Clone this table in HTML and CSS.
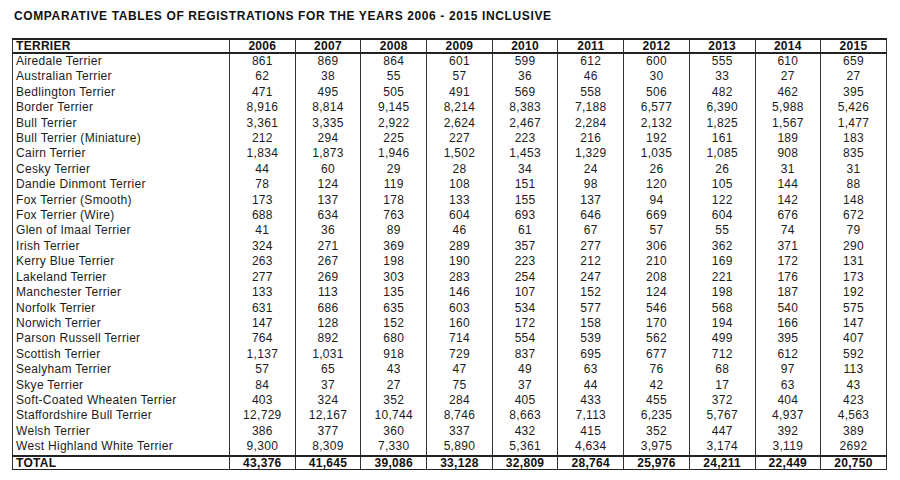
FILE: index.html
```html
<!DOCTYPE html>
<html>
<head>
<meta charset="utf-8">
<link rel="stylesheet" href="styles.css">
</head>
<body>
<div class="page">
<h1 class="title">COMPARATIVE TABLES OF REGISTRATIONS FOR THE YEARS 2006 - 2015 INCLUSIVE</h1>
<table class="reg">
<colgroup><col class="c-name"><col class="c-yr"><col class="c-yr"><col class="c-yr"><col class="c-yr"><col class="c-yr"><col class="c-yr"><col class="c-yr"><col class="c-yr"><col class="c-yr"><col class="c-yr"></colgroup>
<thead>
<tr><th class="name">TERRIER</th><th>2006</th><th>2007</th><th>2008</th><th>2009</th><th>2010</th><th>2011</th><th>2012</th><th>2013</th><th>2014</th><th>2015</th></tr>
</thead>
<tbody>
<tr><td class="name">Airedale Terrier</td><td>861</td><td>869</td><td>864</td><td>601</td><td>599</td><td>612</td><td>600</td><td>555</td><td>610</td><td>659</td></tr>
<tr><td class="name">Australian Terrier</td><td>62</td><td>38</td><td>55</td><td>57</td><td>36</td><td>46</td><td>30</td><td>33</td><td>27</td><td>27</td></tr>
<tr><td class="name">Bedlington Terrier</td><td>471</td><td>495</td><td>505</td><td>491</td><td>569</td><td>558</td><td>506</td><td>482</td><td>462</td><td>395</td></tr>
<tr><td class="name">Border Terrier</td><td>8,916</td><td>8,814</td><td>9,145</td><td>8,214</td><td>8,383</td><td>7,188</td><td>6,577</td><td>6,390</td><td>5,988</td><td>5,426</td></tr>
<tr><td class="name">Bull Terrier</td><td>3,361</td><td>3,335</td><td>2,922</td><td>2,624</td><td>2,467</td><td>2,284</td><td>2,132</td><td>1,825</td><td>1,567</td><td>1,477</td></tr>
<tr><td class="name">Bull Terrier (Miniature)</td><td>212</td><td>294</td><td>225</td><td>227</td><td>223</td><td>216</td><td>192</td><td>161</td><td>189</td><td>183</td></tr>
<tr><td class="name">Cairn Terrier</td><td>1,834</td><td>1,873</td><td>1,946</td><td>1,502</td><td>1,453</td><td>1,329</td><td>1,035</td><td>1,085</td><td>908</td><td>835</td></tr>
<tr><td class="name">Cesky Terrier</td><td>44</td><td>60</td><td>29</td><td>28</td><td>34</td><td>24</td><td>26</td><td>26</td><td>31</td><td>31</td></tr>
<tr><td class="name">Dandie Dinmont Terrier</td><td>78</td><td>124</td><td>119</td><td>108</td><td>151</td><td>98</td><td>120</td><td>105</td><td>144</td><td>88</td></tr>
<tr><td class="name">Fox Terrier (Smooth)</td><td>173</td><td>137</td><td>178</td><td>133</td><td>155</td><td>137</td><td>94</td><td>122</td><td>142</td><td>148</td></tr>
<tr><td class="name">Fox Terrier (Wire)</td><td>688</td><td>634</td><td>763</td><td>604</td><td>693</td><td>646</td><td>669</td><td>604</td><td>676</td><td>672</td></tr>
<tr><td class="name">Glen of Imaal Terrier</td><td>41</td><td>36</td><td>89</td><td>46</td><td>61</td><td>67</td><td>57</td><td>55</td><td>74</td><td>79</td></tr>
<tr><td class="name">Irish Terrier</td><td>324</td><td>271</td><td>369</td><td>289</td><td>357</td><td>277</td><td>306</td><td>362</td><td>371</td><td>290</td></tr>
<tr><td class="name">Kerry Blue Terrier</td><td>263</td><td>267</td><td>198</td><td>190</td><td>223</td><td>212</td><td>210</td><td>169</td><td>172</td><td>131</td></tr>
<tr><td class="name">Lakeland Terrier</td><td>277</td><td>269</td><td>303</td><td>283</td><td>254</td><td>247</td><td>208</td><td>221</td><td>176</td><td>173</td></tr>
<tr><td class="name">Manchester Terrier</td><td>133</td><td>113</td><td>135</td><td>146</td><td>107</td><td>152</td><td>124</td><td>198</td><td>187</td><td>192</td></tr>
<tr><td class="name">Norfolk Terrier</td><td>631</td><td>686</td><td>635</td><td>603</td><td>534</td><td>577</td><td>546</td><td>568</td><td>540</td><td>575</td></tr>
<tr><td class="name">Norwich Terrier</td><td>147</td><td>128</td><td>152</td><td>160</td><td>172</td><td>158</td><td>170</td><td>194</td><td>166</td><td>147</td></tr>
<tr><td class="name">Parson Russell Terrier</td><td>764</td><td>892</td><td>680</td><td>714</td><td>554</td><td>539</td><td>562</td><td>499</td><td>395</td><td>407</td></tr>
<tr><td class="name">Scottish Terrier</td><td>1,137</td><td>1,031</td><td>918</td><td>729</td><td>837</td><td>695</td><td>677</td><td>712</td><td>612</td><td>592</td></tr>
<tr><td class="name">Sealyham Terrier</td><td>57</td><td>65</td><td>43</td><td>47</td><td>49</td><td>63</td><td>76</td><td>68</td><td>97</td><td>113</td></tr>
<tr><td class="name">Skye Terrier</td><td>84</td><td>37</td><td>27</td><td>75</td><td>37</td><td>44</td><td>42</td><td>17</td><td>63</td><td>43</td></tr>
<tr><td class="name">Soft-Coated Wheaten Terrier</td><td>403</td><td>324</td><td>352</td><td>284</td><td>405</td><td>433</td><td>455</td><td>372</td><td>404</td><td>423</td></tr>
<tr><td class="name">Staffordshire Bull Terrier</td><td>12,729</td><td>12,167</td><td>10,744</td><td>8,746</td><td>8,663</td><td>7,113</td><td>6,235</td><td>5,767</td><td>4,937</td><td>4,563</td></tr>
<tr><td class="name">Welsh Terrier</td><td>386</td><td>377</td><td>360</td><td>337</td><td>432</td><td>415</td><td>352</td><td>447</td><td>392</td><td>389</td></tr>
<tr><td class="name">West Highland White Terrier</td><td>9,300</td><td>8,309</td><td>7,330</td><td>5,890</td><td>5,361</td><td>4,634</td><td>3,975</td><td>3,174</td><td>3,119</td><td>2692</td></tr>
</tbody>
<tfoot>
<tr><td class="name">TOTAL</td><td>43,376</td><td>41,645</td><td>39,086</td><td>33,128</td><td>32,809</td><td>28,764</td><td>25,976</td><td>24,211</td><td>22,449</td><td>20,750</td></tr>
</tfoot>
</table>
</div>
</body>
</html>
```

FILE: styles.css
```css
html, body {
  margin: 0;
  padding: 0;
  background: #ffffff;
}

.page {
  padding: 8px 0 0 12px;
  font-family: "Liberation Sans", Arial, sans-serif;
  color: #1c1c1c;
}

.title {
  margin: 0 0 14px 2px;
  font-size: 12px;
  line-height: 16px;
  font-weight: bold;
  letter-spacing: 0.62px;
  color: #111;
}

.reg {
  border-collapse: collapse;
  table-layout: fixed;
  width: 874px;
  font-size: 12px;
  letter-spacing: 0.3px;
  border-left: 1.5px solid #222;
  border-right: 1.5px solid #222;
  border-bottom: 1.5px solid #222;
}

.c-name { width: 217px; }
.c-yr { width: 65.7px; }

.reg th,
.reg td {
  padding: 0;
  text-align: center;
  border-left: 1px solid #333;
  border-right: 1px solid #333;
  white-space: nowrap;
  overflow: hidden;
}

.reg .name {
  text-align: left;
  padding-left: 3px;
}

.reg thead th {
  height: 12px;
  line-height: 12px;
  font-weight: bold;
  color: #111;
  border-top: 2px solid #222;
  border-bottom: 2px solid #222;
}

.reg tbody td {
  height: 15.4px;
  line-height: 15.4px;
}

.reg tfoot td {
  height: 12px;
  line-height: 12px;
  font-weight: bold;
  color: #111;
  border-top: 2px solid #222;
  border-bottom: 1.5px solid #222;
}
```
